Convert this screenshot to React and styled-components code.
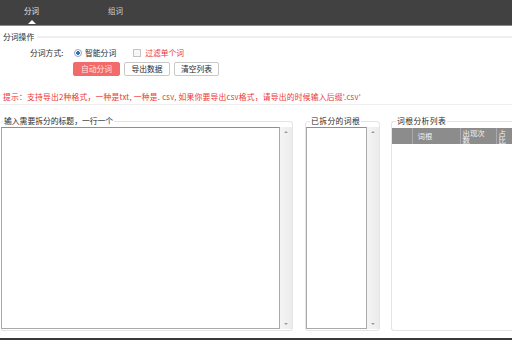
import React from 'react';
import styled, { createGlobalStyle } from 'styled-components';

const GlobalStyle = createGlobalStyle`
    html, body {
        margin: 0;
        padding: 0;
        background: #fff;
        overflow: hidden;
    }
    body {
        width: 512px;
        height: 340px;
        font-family: "Noto Sans CJK SC", "DejaVu Sans", sans-serif;
        font-size: 7.8px;
        color: #2a2a2a;
    }
`;

const Page = styled.div`
    width: 512px;
    display: flex;
    flex-direction: column;
`;

const TabBar = styled.div`
    height: 25px;
    background: #414141;
    border-bottom: 1px solid #8a8a8a;
    display: flex;
    gap: 69px;
    padding-left: 24px;
`;

const Tab = styled.div`
    display: flex;
    flex-direction: column;
    align-items: center;
    padding-top: 5px;
    gap: 3px;
    line-height: 12px;
    font-size: 7.5px;
    color: ${p => (p.$active ? '#e6e6e6' : '#cfcfcf')};
`;

const Caret = styled.span`
    width: 0;
    height: 0;
    border-left: 4px solid transparent;
    border-right: 4px solid transparent;
    border-bottom: 4px solid ${p => (p.$show ? '#fff' : 'transparent')};
`;

const OpsSection = styled.section`
    display: flex;
    flex-direction: column;
    padding-top: 5px;
    padding-bottom: 1px;
    border-bottom: 1px solid #eeeeee;
`;

const SectionTitle = styled.div`
    display: flex;
    align-items: center;
    gap: 3px;
    padding-left: 3px;
    line-height: 12px;

    &::after {
        content: '';
        flex: 1;
        height: 2px;
        background: #efefef;
    }
`;

const OptionRow = styled.div`
    display: flex;
    align-items: center;
    margin-top: 4px;
    padding-left: 30px;
    line-height: 12px;
`;

const FieldLabel = styled.span`
    width: 44px;
`;

const Option = styled.label`
    display: flex;
    align-items: center;
    gap: 3px;
    margin-right: 17px;
    color: ${p => p.$color || 'inherit'};
`;

const Radio = styled.span`
    width: 6px;
    height: 6px;
    border-radius: 50%;
    border: 1px solid #9aa6b4;
    background: radial-gradient(circle, #2f6fc4 0 1.6px, #fff 2px);
`;

const Checkbox = styled.span`
    width: 6px;
    height: 6px;
    border: 1px solid #c4c4c4;
    background: #f6f6f6;
    margin-right: 1px;
`;

const ButtonRow = styled.div`
    display: flex;
    gap: 4px;
    margin-top: 3px;
    padding-left: 73px;
`;

const Button = styled.button`
    width: ${p => p.$w || 46}px;
    height: 14px;
    padding: 0;
    font: inherit;
    line-height: 12px;
    border-radius: 2px;
    border: 1px solid ${p => (p.$primary ? '#f26a6a' : '#c9c9c9')};
    background: ${p => (p.$primary ? '#f26a6a' : '#fff')};
    color: ${p => (p.$primary ? '#ffe3e3' : '#2a2a2a')};
`;

const Hint = styled.p`
    margin: 15px 0 0;
    padding-left: 3px;
    line-height: 12px;
    letter-spacing: 0.2px;
    color: #ee3434;
    white-space: nowrap;
`;

const Panels = styled.div`
    display: flex;
    align-items: flex-start;
    margin-top: 10px;
`;

const Panel = styled.fieldset`
    margin: 0 0 0 ${p => p.$offset || 0}px;
    padding: 0 0 1px;
    border: 1px solid #e4e4e4;
    border-left-color: ${p => (p.$noLeft ? 'transparent' : '#e4e4e4')};
    border-right-color: ${p => (p.$noRight ? 'transparent' : '#e4e4e4')};
    border-radius: 3px;
    min-width: 0;
    flex: none;
    width: ${p => p.$w}px;
    box-sizing: border-box;
`;

const Legend = styled.legend`
    margin-left: ${p => p.$indent || 3}px;
    padding: 0 1px;
    line-height: 12px;
    letter-spacing: ${p => p.$spacing || 0}px;
`;

const Scrollable = styled.div`
    display: flex;
    align-items: flex-start;
    height: 202px;
`;

const TextArea = styled.div`
    flex: 1;
    align-self: stretch;
    border: 1px solid #a9a9a9;
    border-top-color: #8f8f8f;
    background: #fff;
`;

const Scrollbar = styled.div`
    width: 12px;
    align-self: stretch;
    display: flex;
    flex-direction: column;
    align-items: center;
    justify-content: space-between;
    padding: 4px 0;
    box-sizing: border-box;
    background: linear-gradient(to right, #f4f4f4, #ececec);
`;

const Arrow = styled.span`
    width: 0;
    height: 0;
    border-left: 2px solid transparent;
    border-right: 2px solid transparent;
    ${p => (p.$down ? 'border-top' : 'border-bottom')}: 2px solid #9a9a9a;
`;

const Table = styled.table`
    width: 122px;
    flex: none;
    border-collapse: collapse;
    margin-top: 1px;
    table-layout: fixed;
`;

const HeadCell = styled.th`
    box-sizing: border-box;
    width: ${p => p.$w}px;
    height: 16px;
    padding: 0 ${p => p.$padR || 0}px 0 ${p => p.$pad || 3}px;
    background: #8c8c8c;
    border-right: 1px solid #a9a9a9;
    color: #f2f2f2;
    font-weight: normal;
    font-size: 7.4px;
    line-height: 7.5px;
    text-align: left;
    vertical-align: middle;
    word-break: break-all;
`;

const Footer = styled.div`
    height: 12px;
    margin-top: 7px;
    background: #3a3a3a;
`;

const ScrollBox = ({ children }) => (
    <Scrollable>
        <TextArea>{children}</TextArea>
        <Scrollbar>
            <Arrow />
            <Arrow $down />
        </Scrollbar>
    </Scrollable>
);

export default function App() {
    return (
        <Page>
            <GlobalStyle />
            <TabBar>
                <Tab $active>分词<Caret $show /></Tab>
                <Tab>组词<Caret /></Tab>
            </TabBar>

            <OpsSection>
                <SectionTitle>分词操作</SectionTitle>
                <OptionRow>
                    <FieldLabel>分词方式:</FieldLabel>
                    <Option><Radio />智能分词</Option>
                    <Option $color="#ee3434"><Checkbox />过滤单个词</Option>
                </OptionRow>
                <ButtonRow>
                    <Button $primary $w={47}>自动分词</Button>
                    <Button $w={46}>导出数据</Button>
                    <Button $w={45}>清空列表</Button>
                </ButtonRow>
                <Hint>提示：支持导出2种格式，一种是txt, 一种是. csv, 如果你要导出csv格式，请导出的时候输入后缀'.csv'</Hint>
            </OpsSection>

            <Panels>
                <Panel $w={293} $noLeft>
                    <Legend $indent={2}>输入需要拆分的标题，一行一个</Legend>
                    <ScrollBox />
                </Panel>
                <Panel $w={75} $offset={12}>
                    <Legend $indent={4} $spacing={0.4}>已拆分的词根</Legend>
                    <ScrollBox />
                </Panel>
                <Panel $w={130} $offset={11} $noRight>
                    <Legend $indent={4} $spacing={0.4}>词根分析列表</Legend>
                    <Scrollable>
                        <Table>
                            <thead>
                                <tr>
                                    <HeadCell $w={20} />
                                    <HeadCell $w={48} $pad={5}>词根</HeadCell>
                                    <HeadCell $w={36} $pad={2} $padR={8}>出现次数</HeadCell>
                                    <HeadCell $w={18} $pad={2} $padR={6}>占比</HeadCell>
                                </tr>
                            </thead>
                        </Table>
                    </Scrollable>
                </Panel>
            </Panels>
            <Footer />
        </Page>
    );
}
